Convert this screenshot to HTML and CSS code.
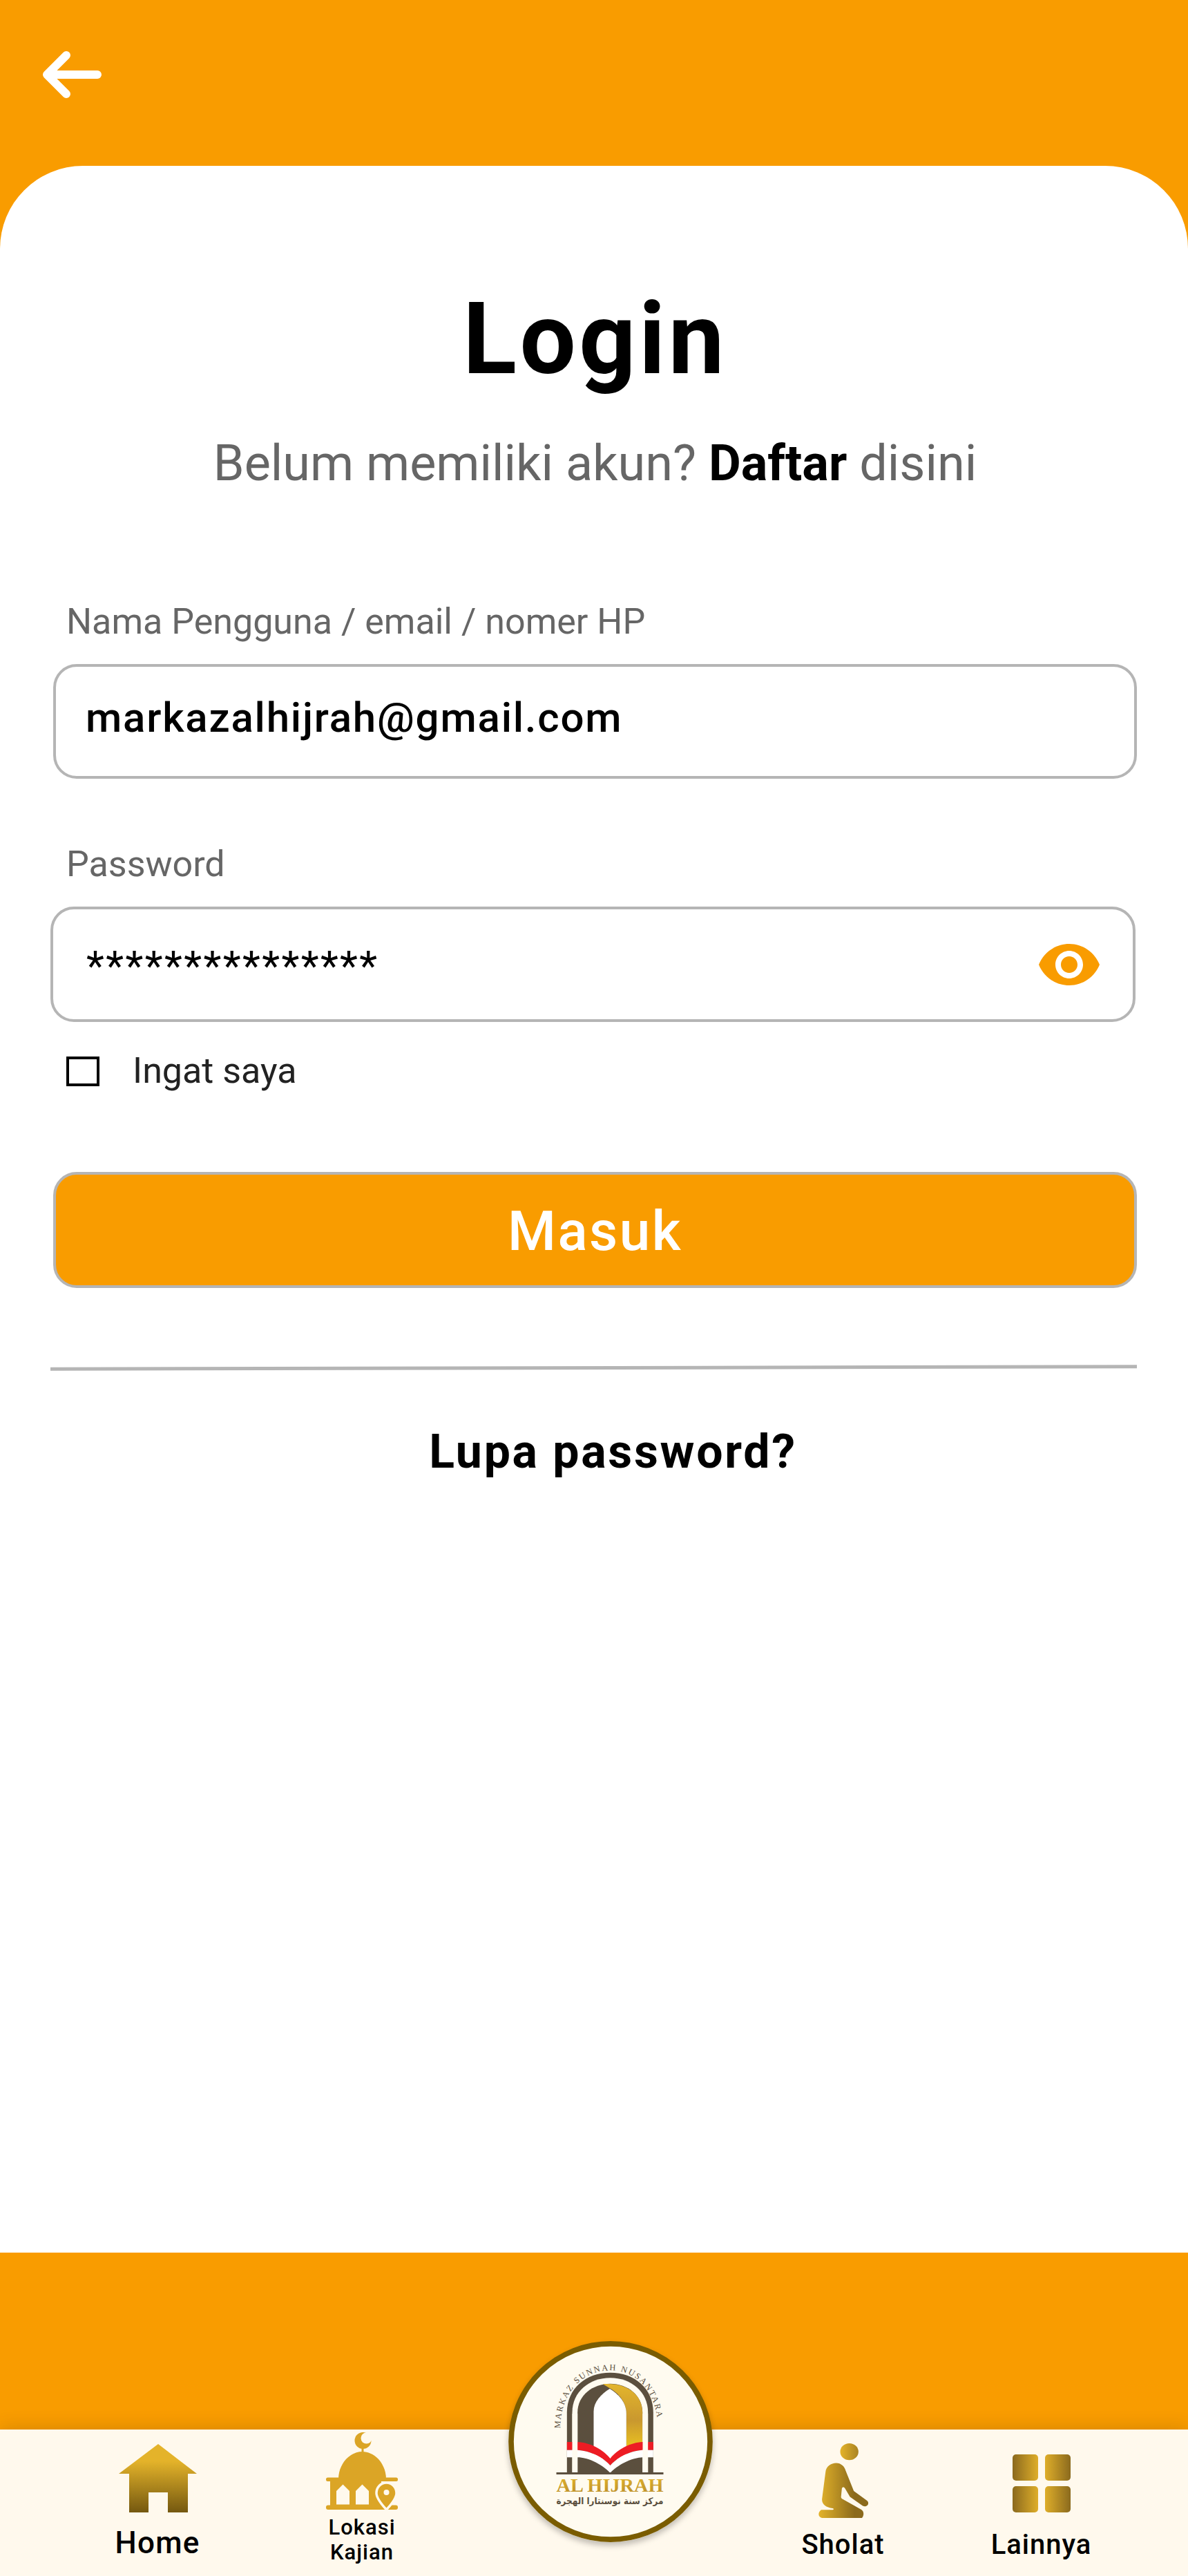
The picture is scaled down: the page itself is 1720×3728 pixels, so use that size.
FILE: index.html
```html
<!DOCTYPE html>
<html lang="id">
<head>
<meta charset="utf-8">
<title>Login</title>
<link rel="stylesheet" href="styles.css">
</head>
<body>
<div class="app">
  <header class="topbar">
    <svg class="back" viewBox="0 0 100 76" aria-hidden="true"><path d="M93 38H20M48 10L20 38L48 66" fill="none" stroke="#fff" stroke-width="12" stroke-linecap="round" stroke-linejoin="round"/></svg>
  </header>
  <main class="card">
    <h1 class="title">Login</h1>
    <p class="subtitle">Belum memiliki akun? <b>Daftar</b> disini</p>
    <div class="label label-first">Nama Pengguna / email / nomer HP</div>
    <div class="field"><span class="value value-email">markazalhijrah@gmail.com</span></div>
    <div class="label label-second">Password</div>
    <div class="field field-password">
      <span class="value value-stars">***************</span>
      <svg class="eye" viewBox="1 4.5 22 15" aria-hidden="true"><path fill="#F99C00" d="M12 4.5C7 4.5 2.73 7.61 1 12c1.73 4.39 6 7.5 11 7.5s9.27-3.11 11-7.5c-1.73-4.39-6-7.5-11-7.5zM12 17c-2.76 0-5-2.24-5-5s2.24-5 5-5 5 2.24 5 5-2.24 5-5 5zm0-8c-1.66 0-3 1.34-3 3s1.34 3 3 3 3-1.34 3-3-1.34-3-3-3z"/></svg>
    </div>
    <div class="remember"><span class="checkbox"></span><span class="remember-text">Ingat saya</span></div>
    <div class="button"><span class="button-text">Masuk</span></div>
    <div class="divider"></div>
    <div class="forgot">Lupa password?</div>
  </main>
  <div class="band"></div>
  <nav class="nav">
    <div class="item item-home">
      <svg class="icon-home" viewBox="0 0 113 99" aria-hidden="true">
        <defs><linearGradient id="gHome" x1="0" y1="0" x2="0" y2="1"><stop offset="0.25" stop-color="#E4B32A"/><stop offset="1" stop-color="#745810"/></linearGradient></defs>
        <path fill="url(#gHome)" d="M57 0L113 43H100V99H71V70H43V99H15V43H0Z"/>
      </svg>
      <span class="text-home">Home</span>
    </div>
    <div class="item item-mosque">
      <svg class="icon-mosque" viewBox="0 0 104 112" aria-hidden="true">
        <circle cx="53.5" cy="12" r="12" fill="#DBA526"/>
        <circle cx="58.5" cy="8.5" r="8" fill="#FFF9ED"/>
        <rect x="51.5" y="23" width="3" height="7" fill="#DBA526"/>
        <path fill="#DBA526" d="M18 68C18 45 35 28 52.5 28C70 28 87 45 87 68Z"/>
        <rect x="0" y="65.5" width="104" height="5.5" rx="2.5" fill="#DBA526"/>
        <rect x="6" y="68" width="74" height="40" fill="#DBA526"/>
        <rect x="0" y="105.5" width="104" height="6.5" rx="3" fill="#DBA526"/>
        <path fill="#FFF9ED" d="M15 104.5V85L24.5 75.5L34 85V104.5Z"/>
        <path fill="#FFF9ED" d="M43 104.5V85L52.5 75.5L62 85V104.5Z"/>
        <path fill="#DBA526" stroke="#FFF9ED" stroke-width="3.5" d="M87.5 73C79 73 73 80 73 88C73 96 81 105 87.5 112C94 105 102 96 102 88C102 80 96 73 87.5 73Z"/>
        <circle cx="87.5" cy="87" r="4" fill="#FFF9ED"/>
      </svg>
      <span class="text-mosque">Lokasi<br>Kajian</span>
    </div>
    <div class="nav-spacer"></div>
    <div class="item item-sholat">
      <svg class="icon-sholat" viewBox="212 107 183 325" preserveAspectRatio="none" aria-hidden="true">
        <defs><linearGradient id="gSholat" gradientUnits="userSpaceOnUse" x1="212" y1="0" x2="345" y2="0"><stop offset="0" stop-color="#E4B32A"/><stop offset="1" stop-color="#8B6A1C"/></linearGradient>
        <linearGradient id="gHead" x1="0" y1="0" x2="1" y2="0"><stop offset="0" stop-color="#E4B32A"/><stop offset="1" stop-color="#A98322"/></linearGradient></defs>
        <ellipse cx="325.500" cy="143.500" rx="33.500" ry="36.500" fill="url(#gHead)"/>
        <path fill="url(#gSholat)" d="M238 232C240 208 258 193 277 193C295 193 308 208 312 226L342 315L390 356C397 362 397 372 391 378C386 383 380 382 375 379L328 340L310 304C306 296 300 296 298 304L295 340C295 345 297 347 300 349L370 396C380 404 380 420 372 432H225C212 430 207 410 222 397H262C268 397 270 392 264 390C240 386 224 372 225 350Z"/>
      </svg>
      <span class="text-small">Sholat</span>
    </div>
    <div class="item item-more">
      <svg class="icon-more" viewBox="0 0 84 84" aria-hidden="true">
        <defs><linearGradient id="gMore" gradientUnits="userSpaceOnUse" x1="0" y1="0" x2="84" y2="0"><stop offset="0" stop-color="#8B6A1E"/><stop offset="0.45" stop-color="#E0AF2A"/><stop offset="0.55" stop-color="#E0AF2A"/><stop offset="1" stop-color="#8B6A1E"/></linearGradient></defs>
        <rect x="0" y="0" width="37" height="38" rx="5" fill="url(#gMore)"/>
        <rect x="47" y="0" width="37" height="38" rx="5" fill="url(#gMore)"/>
        <rect x="0" y="46" width="37" height="38" rx="5" fill="url(#gMore)"/>
        <rect x="47" y="46" width="37" height="38" rx="5" fill="url(#gMore)"/>
      </svg>
      <span class="text-small">Lainnya</span>
    </div>
    <div class="logo">
      <svg class="logo-art" viewBox="108 85 887 873" aria-hidden="true">
        <defs>
          <linearGradient id="gGold" x1="0" y1="0" x2="0" y2="1"><stop offset="0" stop-color="#E3B52C"/><stop offset="0.55" stop-color="#C9982F"/><stop offset="0.9" stop-color="#E5BC22"/></linearGradient>
          <linearGradient id="gText" x1="0" y1="0" x2="0" y2="1"><stop offset="0" stop-color="#E3B52C"/><stop offset="1" stop-color="#B88B2A"/></linearGradient>
          <path id="arcPath" d="M333 465C333 310 430 212 550 212C670 212 755 310 757 465"/>
        </defs>
        <ellipse cx="551.500" cy="521.500" rx="432" ry="425" fill="#FFFBF0" stroke="#7A5C00" stroke-width="23"/>
        <path fill="#5B4F3E" d="M362 655V395C362 290 445 222 550 222C655 222 737 290 737 395V655Z"/>
        <path fill="#FFFBF0" d="M385 655V395C385 305 460 245 550 245C640 245 714 305 714 395V655Z"/>
        <path fill="#5B4F3E" d="M408 655V395C408 320 475 270 550 270C625 270 690 320 690 395V655Z"/>
        <path fill="url(#gGold)" d="M518 272C610 262 690 310 690 395V560H620V400C620 350 585 310 548 290Z"/>
        <path fill="#FFFFFF" d="M478 600V390C478 350 510 315 548 292C585 315 620 350 620 400V600Z"/>
        <path fill="#ED1C24" d="M362 523H408C460 525 520 555 550 595C580 555 640 525 690 523H737V558H690C640 560 580 590 550 625C520 590 460 560 408 558H362Z"/>
        <path fill="#FFFFFF" d="M362 558H408C460 560 520 590 550 625C580 590 640 560 690 558H737V590H690C640 592 580 625 550 658C520 625 460 590 408 590H362Z"/>
        <rect x="385" y="400" width="23" height="255" fill="#FFFBF0"/>
        <rect x="691" y="400" width="23" height="255" fill="#FFFBF0"/>
        <rect x="316" y="655" width="465" height="9" fill="#5B4F3E"/>
        <text class="logo-arc"><textPath href="#arcPath">MARKAZ SUNNAH NUSANTARA</textPath></text>
        <text class="logo-name" x="316" y="740" textLength="465" lengthAdjust="spacingAndGlyphs">AL HIJRAH</text>
        <text class="logo-arabic" x="781" y="793" textLength="465" lengthAdjust="spacingAndGlyphs" direction="rtl">مركز سنة نوسنتارا الهجرة</text>
      </svg>
    </div>
  </nav>
</div>
</body>
</html>
```

FILE: styles.css
```css
* { box-sizing: border-box; }
html, body { margin: 0; padding: 0; }
body { font-family: Roboto, "Liberation Sans", sans-serif; background: #F99C00; }

.app { width: 1720px; height: 3728px; display: flex; flex-direction: column; background: #F99C00; overflow: hidden; }

.topbar { height: 240px; flex: none; padding: 70px 0 0 48px; }
.back { display: block; width: 100px; height: 76px; }

.card {
  flex: 1;
  background: #fff;
  border-radius: 120px 120px 0 0;
  padding: 166px 74px 0 77px;
}
.title { margin: 0; text-align: center; font-size: 144px; line-height: 170px; font-weight: 700; color: #000; letter-spacing: 4.5px; }
.subtitle { margin: 54px 0 0; text-align: center; font-size: 72px; line-height: 82px; color: #666; font-weight: 400; }
.subtitle b { color: #000; font-weight: 700; }

.label { font-size: 52px; line-height: 60px; color: #666; padding-left: 19px; margin-bottom: 31px; }
.label-first { margin-top: 158px; }
.label-second { margin-top: 94px; }

.field {
  height: 166px;
  border: 4px solid #B5B5B5;
  border-radius: 34px;
  padding: 0 48px 0 43px;
  display: flex;
  align-items: center;
  justify-content: space-between;
  background: #fff;
}
.field-password { height: 167px; margin: 0 2px 0 -4px; padding-left: 48px; }
.value { color: #000; font-size: 60px; line-height: 70px; font-weight: 500; letter-spacing: 1.8px; }
.value-email { padding-bottom: 10px; }
.value-stars { font-weight: 400; letter-spacing: 2.4px; padding-top: 4px; }
.eye { width: 88px; height: 60px; display: block; flex: none; }

.remember { display: flex; align-items: center; margin-top: 41px; padding-left: 19px; height: 60px; }
.checkbox { width: 48px; height: 43px; border: 4px solid #000; background: #fff; flex: none; }
.remember-text { font-size: 52px; line-height: 60px; color: #222; margin-left: 48px; }

.button {
  margin-top: 116px;
  height: 168px;
  border: 4px solid #B5B5B5;
  border-radius: 34px;
  background: #F99C00;
  color: #fff;
  font-size: 80px;
  font-weight: 500;
  letter-spacing: 2.5px;
  display: flex;
  align-items: center;
  justify-content: center;
}
.button-text { padding-top: 4px; }
.divider { margin: 113px 0 0 -4px; height: 5px; background: #B5B5B5; transform: rotate(-0.13deg); }
.forgot { margin-top: 80px; padding-left: 52px; text-align: center; font-size: 68px; line-height: 78px; font-weight: 700; color: #000; letter-spacing: 2.7px; }

.band { height: 256px; flex: none; background: #F99C00; }

.nav {
  position: relative;
  height: 212px;
  flex: none;
  background: #FFF9ED;
  box-shadow: 0 -4px 24px rgba(0, 0, 0, 0.12);
  display: grid;
  grid-template-columns: 296px 296px 1fr 287px 287px;
  padding: 0 69px 0 80px;
}
.item { display: flex; flex-direction: column; align-items: center; color: #000; text-align: center; }
.item svg { display: block; flex: none; }
.item-home { padding-top: 21px; }
.item-mosque { padding-top: 4px; }
.item-sholat { padding-top: 20px; }
.item-more { padding-top: 36px; }

.icon-home { width: 113px; height: 99px; }
.text-home { margin-top: 20px; font-size: 44px; line-height: 48px; font-weight: 500; letter-spacing: 1.2px; }
.icon-mosque { width: 104px; height: 112px; }
.text-mosque { margin-top: 8px; font-size: 31px; line-height: 36px; font-weight: 500; letter-spacing: 1px; }
.icon-sholat { width: 72px; height: 108px; }
.icon-more { width: 84px; height: 84px; }
.item-sholat .text-small { margin-top: 15px; }
.item-more .text-small { margin-top: 23px; }
.text-small { font-size: 40px; line-height: 48px; font-weight: 500; letter-spacing: 1px; }

.logo {
  position: absolute;
  left: 736px;
  top: -128px;
  width: 296px;
  height: 291px;
  border-radius: 50%;
  box-shadow: 0 5px 8px rgba(0, 0, 0, 0.25);
}
.logo-art { display: block; width: 100%; height: 100%; }
.logo-arc { font-family: "Liberation Serif", serif; font-size: 37px; letter-spacing: 6px; fill: #5B4F3E; }
.logo-name { font-family: "Liberation Serif", serif; font-size: 82px; font-weight: 700; fill: url(#gText); }
.logo-arabic { font-family: "DejaVu Sans", sans-serif; font-size: 40px; font-weight: 700; fill: #5B4F3E; }
```
